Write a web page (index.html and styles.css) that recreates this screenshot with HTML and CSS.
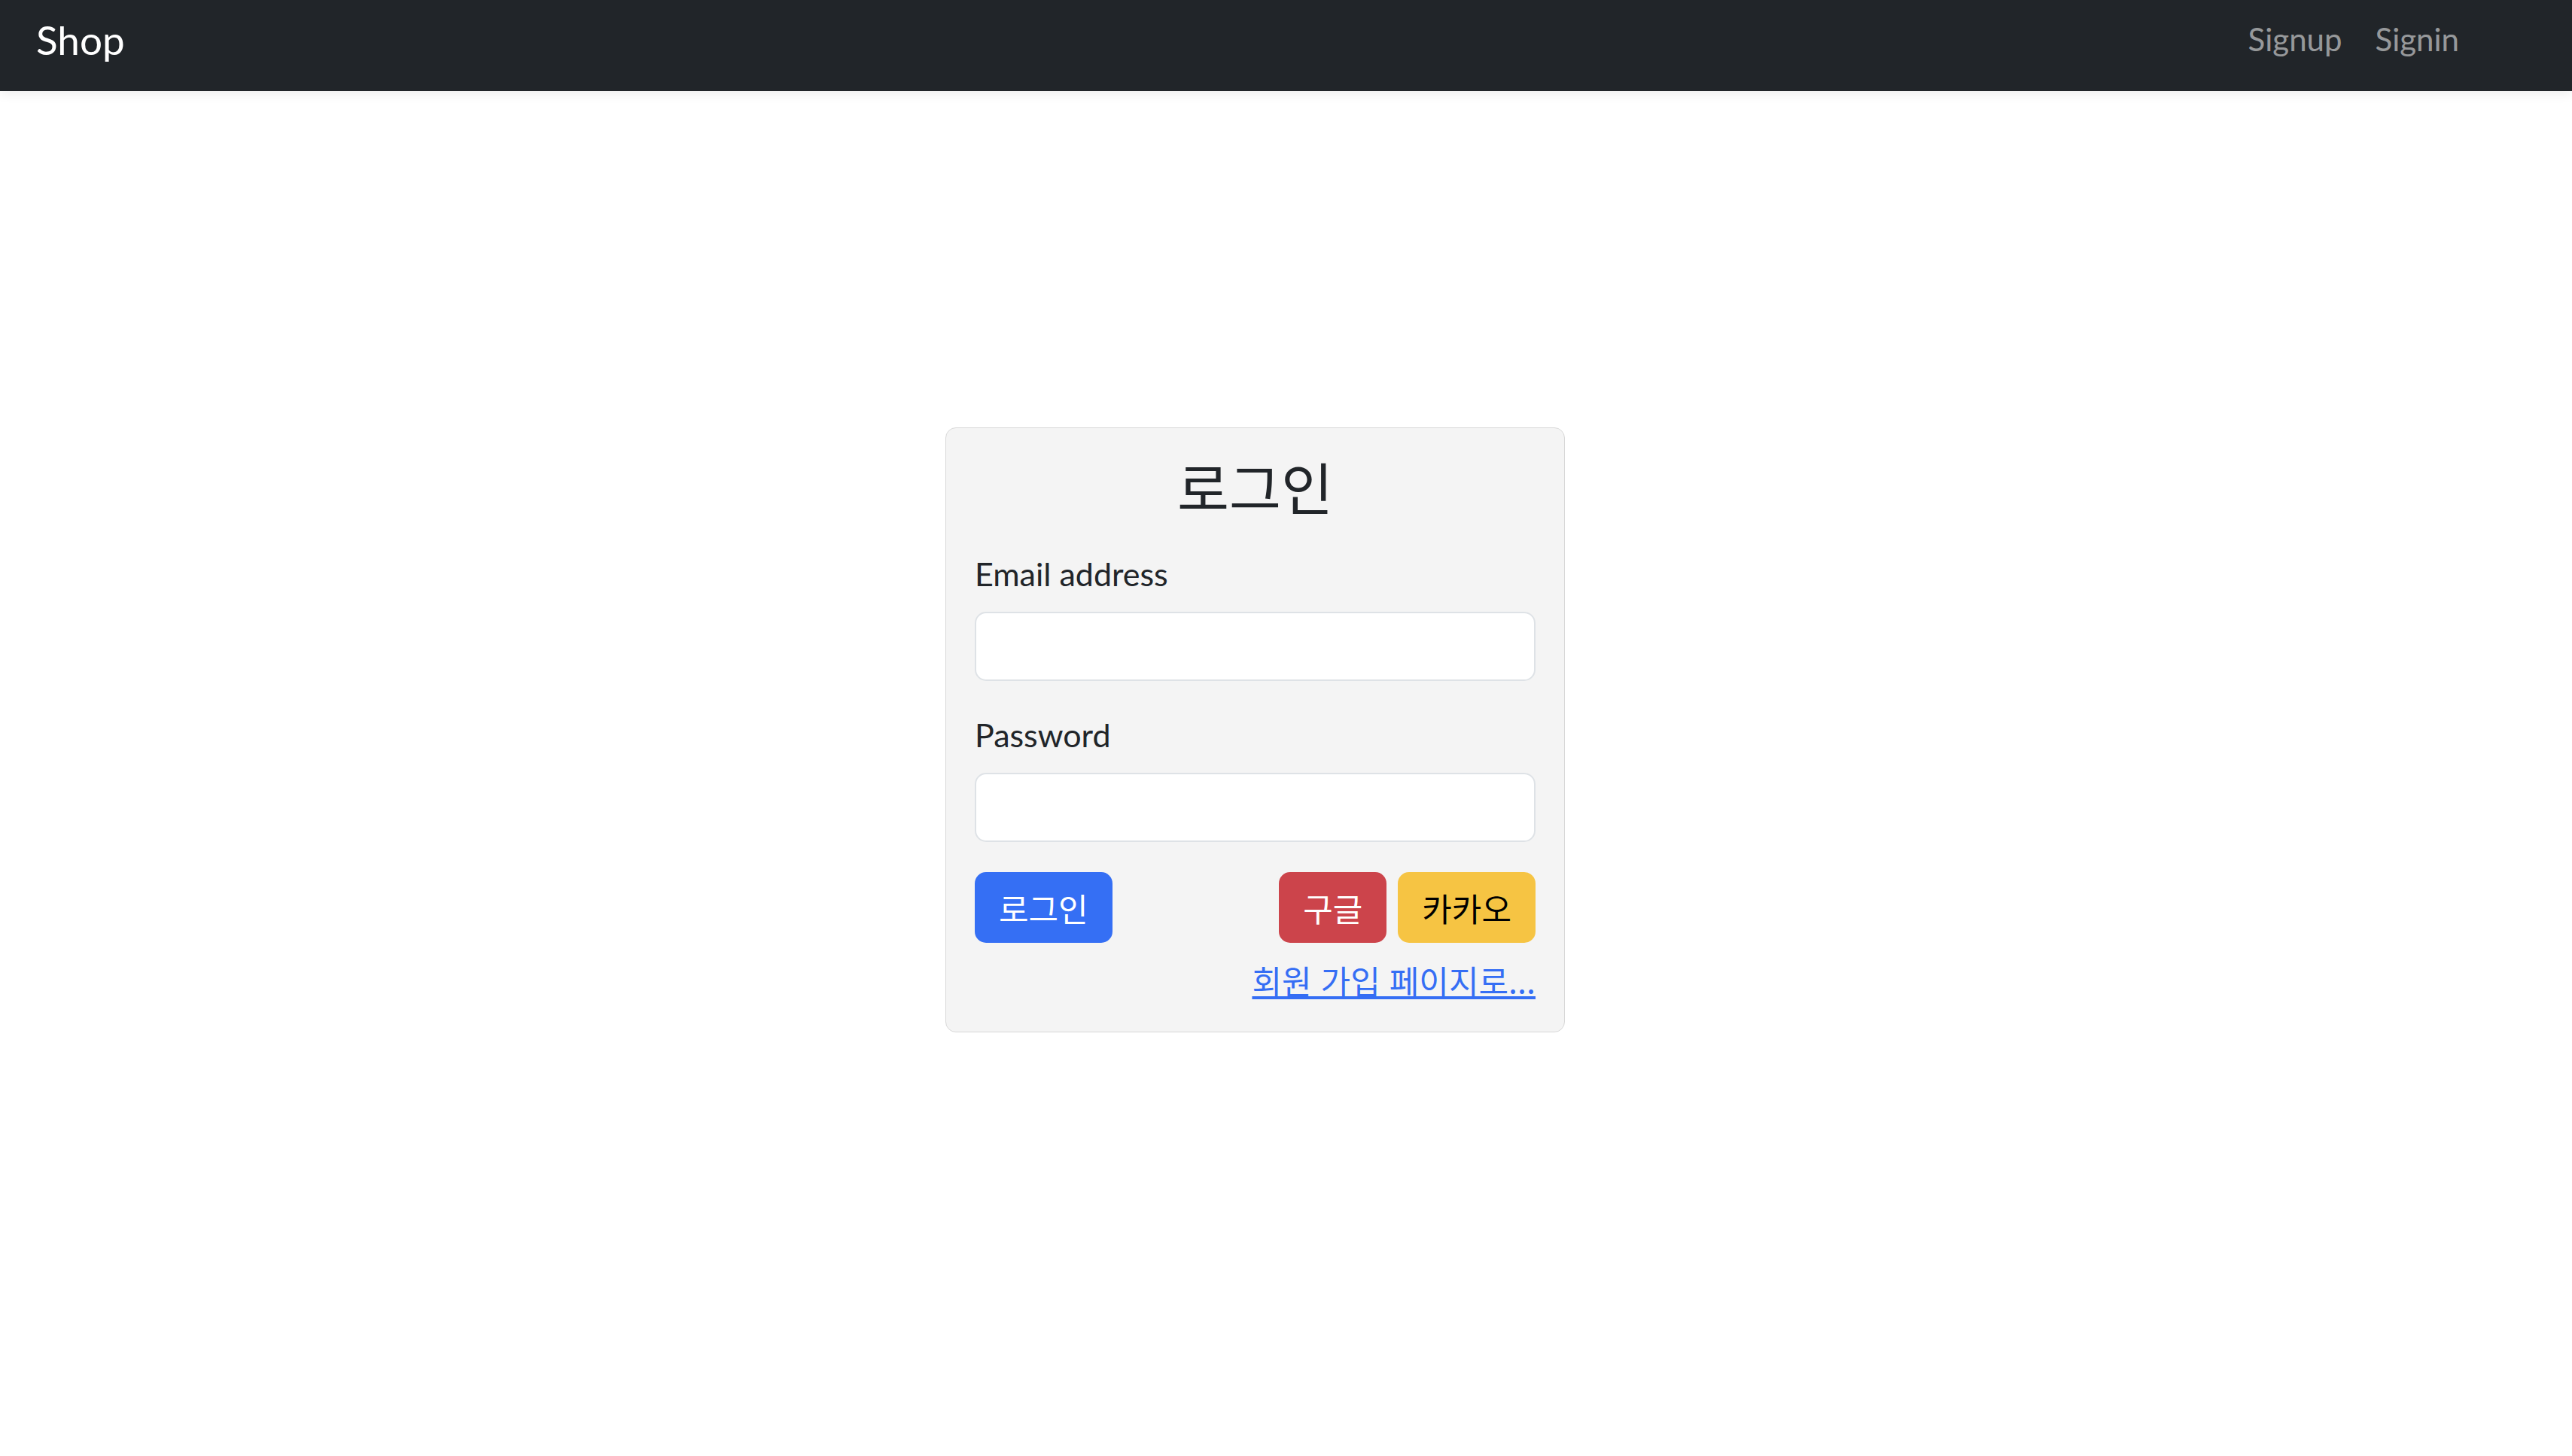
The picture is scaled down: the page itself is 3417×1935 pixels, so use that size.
FILE: index.html
```html
<!DOCTYPE html>
<html lang="ko">
<head>
<meta charset="utf-8">
<title>Shop</title>
<link rel="stylesheet" href="styles.css">
</head>
<body>
<nav class="navbar">
  <a class="brand" href="#">Shop</a>
  <ul class="nav-links">
    <li><a href="#">Signup</a></li>
    <li><a href="#">Signin</a></li>
  </ul>
</nav>
<main class="page">
  <form class="card">
    <h3 class="title ko">로그인</h3>
    <label class="label" for="email">Email address</label>
    <input class="input" id="email" type="email">
    <label class="label label-pw" for="pw">Password</label>
    <input class="input" id="pw" type="password">
    <div class="actions">
      <button type="button" class="btn btn-primary ko">로그인</button>
      <div class="social">
        <button type="button" class="btn btn-danger ko">구글</button>
        <button type="button" class="btn btn-warning ko">카카오</button>
      </div>
    </div>
    <div class="signup-row"><a class="signup-link ko" href="#">회원 가입 페이지로...</a></div>
  </form>
</main>
</body>
</html>
```

FILE: styles.css
```css
* { box-sizing: border-box; }
html, body { margin: 0; padding: 0; background: #ffffff; }
body {
  font-family: "Lato", "Noto Sans CJK KR", sans-serif;
  color: #212529;
}
.ko {
  font-family: "Noto Sans CJK KR", "Lato", sans-serif;
}
.navbar {
  height: 121px;
  background: #212529;
  display: flex;
  align-items: flex-start;
  padding: 26px 150px 0 48px;
  box-shadow: 0 4px 14px rgba(0, 0, 0, 0.07);
  position: relative;
}
.brand {
  color: #ffffff;
  text-decoration: none;
  font-size: 53px;
  line-height: 54px;
}
.nav-links {
  list-style: none;
  margin: 0 0 0 auto;
  padding: 5px 0 0 0;
  display: flex;
  gap: 44px;
}
.nav-links a {
  color: rgba(255, 255, 255, 0.55);
  text-decoration: none;
  font-size: 42px;
  line-height: 43px;
}
.page {
  padding-top: 447px;
  padding-left: 1256px;
}
.card {
  width: 823px;
  height: 804px;
  background: #f4f4f4;
  border: 1px solid #d8d8d8;
  border-radius: 14px;
  padding: 37px 38px 0 38px;
  display: flex;
  flex-direction: column;
}
.title {
  margin: 0 0 47px 0;
  font-size: 75px;
  line-height: 80px;
  font-weight: 400;
  text-align: center;
  color: #212529;
}
.label {
  display: block;
  font-size: 43px;
  line-height: 60px;
  margin-bottom: 20px;
}
.label-pw { margin-top: 42px; }
.input {
  display: block;
  width: 100%;
  height: 92px;
  background: #ffffff;
  border: 2px solid #dee2e6;
  border-radius: 15px;
  margin: 0;
  outline: none;
}
.actions {
  margin-top: 40px;
  display: flex;
  justify-content: space-between;
}
.social {
  display: flex;
  gap: 15px;
}
.btn {
  height: 94px;
  border: none;
  border-radius: 15px;
  padding: 0 32px;
  font-size: 43px;
  line-height: 94px;
  cursor: pointer;
}
.btn-primary { background: #356ff4; color: #ffffff; }
.btn-danger { background: #cc444b; color: #ffffff; }
.btn-warning { background: #f6c443; color: #000000; }
.signup-row {
  margin-top: 19px;
  text-align: right;
}
.signup-link {
  font-size: 43px;
  line-height: 60px;
  color: #356ef4;
  text-decoration: underline;
}
```
